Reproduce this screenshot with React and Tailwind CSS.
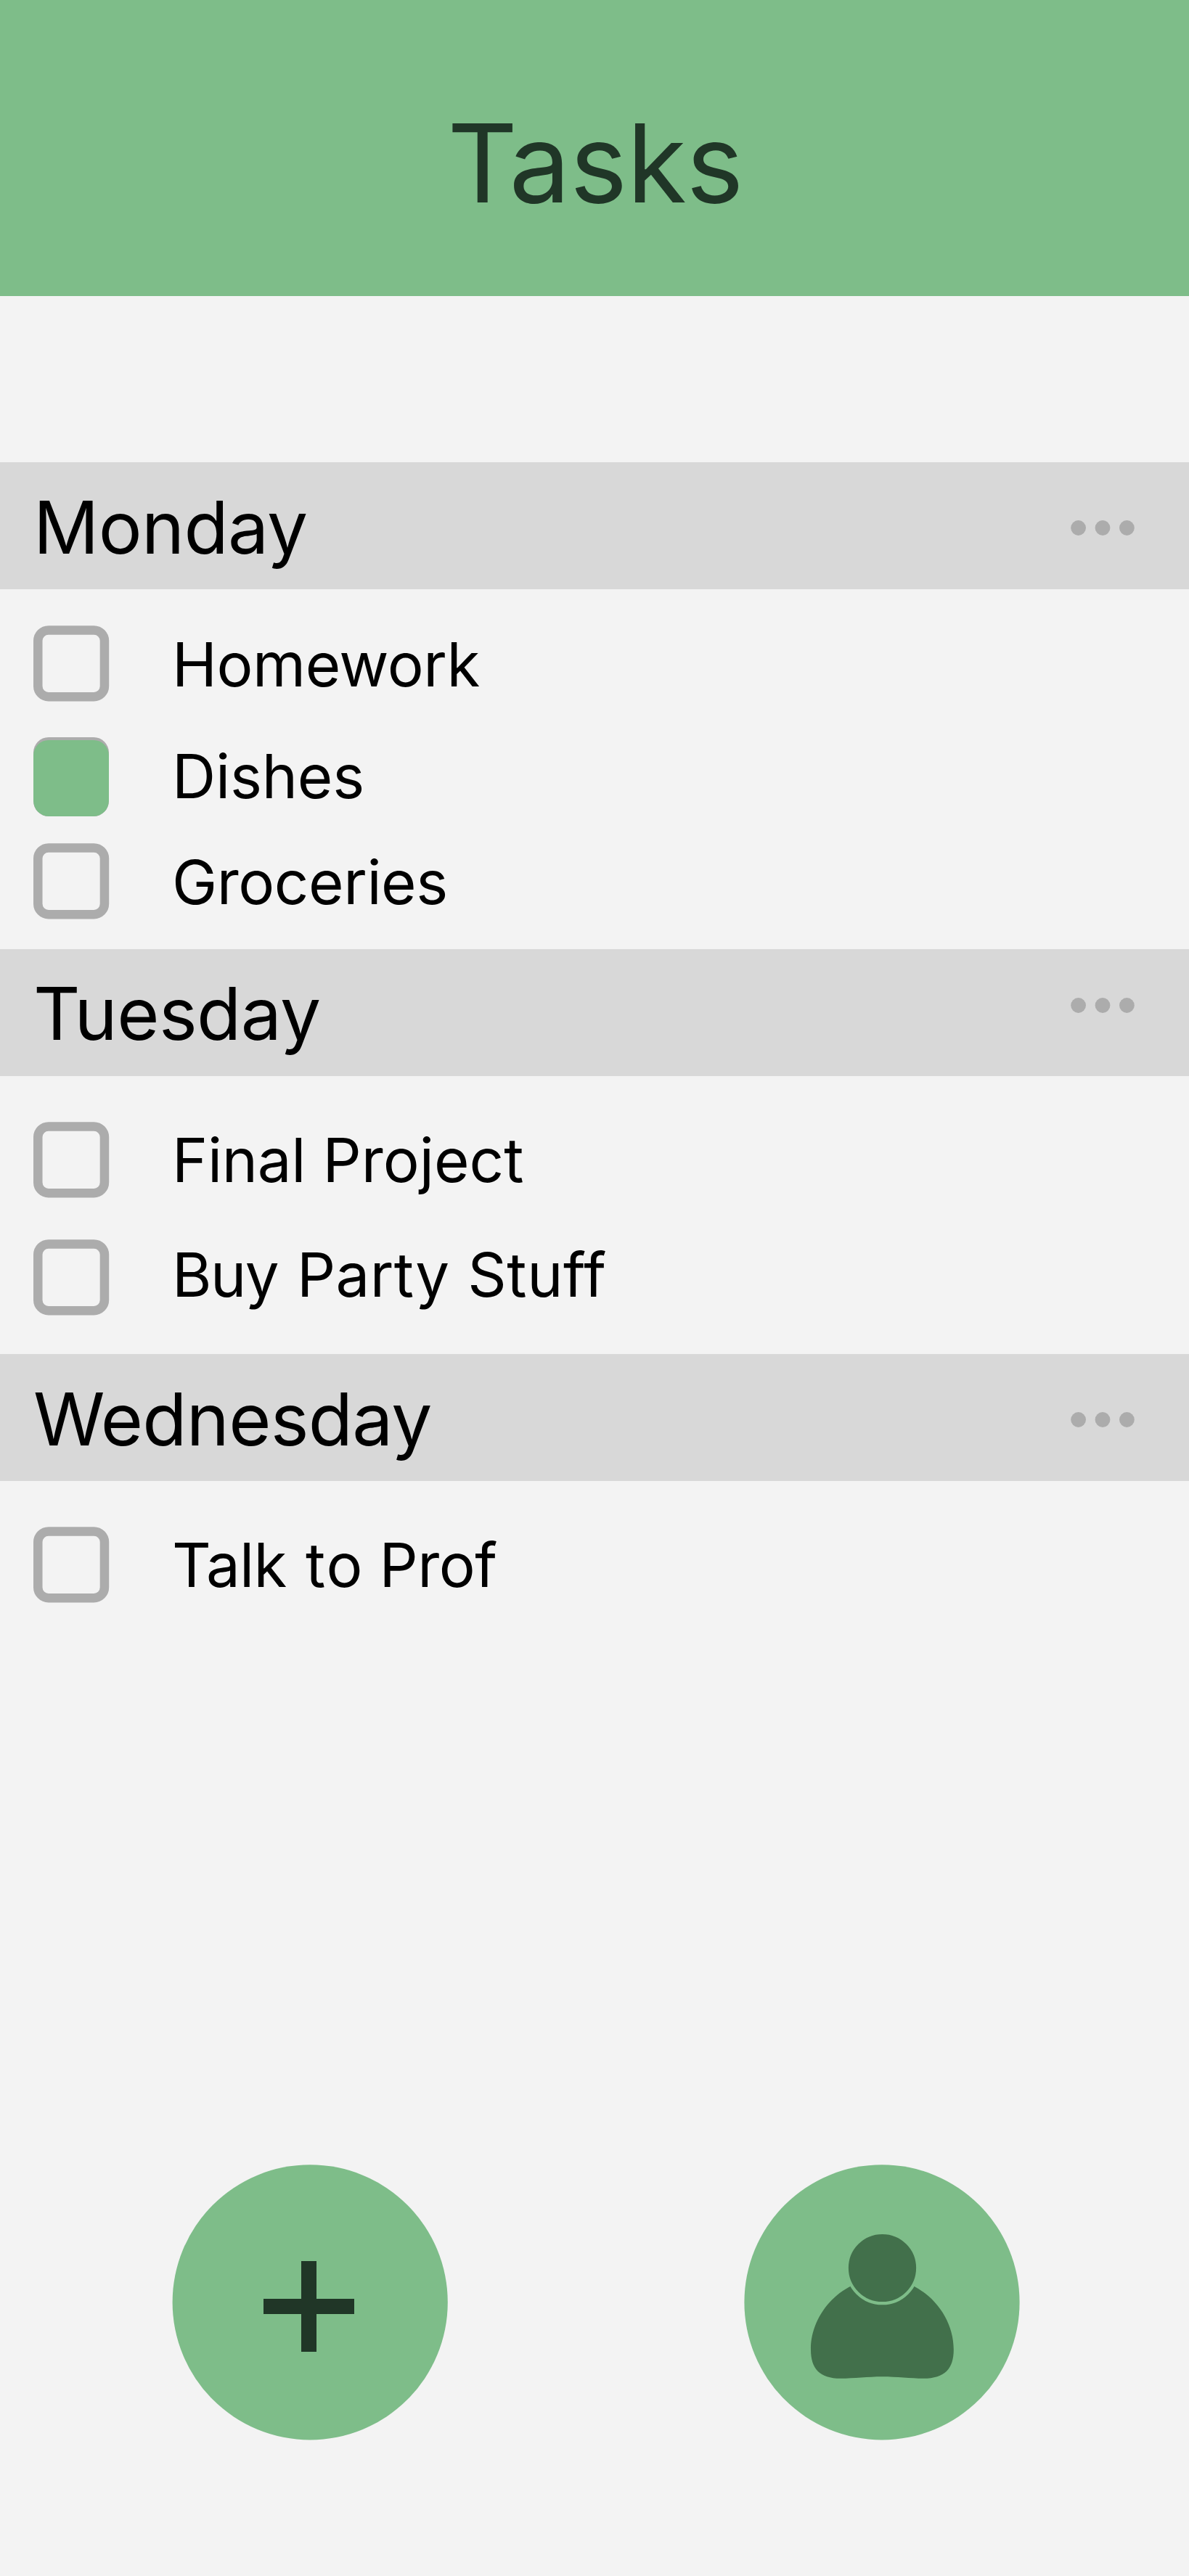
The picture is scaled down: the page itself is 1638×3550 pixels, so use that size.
const Check = ({ done }) =>
  done ? (
    <span className="relative h-[109px] w-[104px] shrink-0 overflow-hidden rounded-[21px] bg-[#acacac]">
      <span className="absolute inset-x-0 bottom-0 h-[105px] rounded-[21px] bg-[#7ebd89]" />
    </span>
  ) : (
    <svg className="-mr-px block shrink-0" width="105" height="105" viewBox="0 0 105 105" fill="none">
      <rect x="6.25" y="6.5" width="91.7" height="91.7" rx="14.6" stroke="#acacac" strokeWidth="12.5" />
    </svg>
  );

const Task = ({ done, className, labelClass, children }) => (
  <li className={`flex items-start gap-[87px] pl-[46px] ${className || ""}`}>
    <Check done={done} />
    <span className={`text-[83.36px] leading-[105px] whitespace-nowrap ${labelClass || ""}`}>{children}</span>
  </li>
);

const Day = ({ name, dotsClass, nameClass, className, children }) => (
  <section className={className}>
    <header className="flex h-[175px] items-start justify-between bg-[#d8d8d8] pr-[75px] pl-[46px]">
      <h2 className={`text-[100px] leading-[175px] ${nameClass}`}>{name}</h2>
      <button aria-label="More" className={dotsClass}>
        <svg className="block" width="88" height="21" viewBox="0 0 88 21" fill="#acacac">
          <circle cx="10.6" cy="10.5" r="10.4" />
          <circle cx="44" cy="10.5" r="10.4" />
          <circle cx="77.4" cy="10.5" r="10.4" />
        </svg>
      </button>
    </header>
    <ul>{children}</ul>
  </section>
);

export default function App() {
  return (
    <main className="flex h-[3550px] w-[1638px] flex-col overflow-hidden bg-[#f3f3f3] font-['Inter',sans-serif] text-black">
      <header className="h-[408px] bg-[#7ebd89] pt-[134px] text-center">
        <h1 className="pl-[2px] text-[150px] leading-[181px] tracking-[-0.65px] text-[#203627]">Tasks</h1>
      </header>

      <Day name="Monday" className="mt-[229px] h-[671px]" dotsClass="mt-[80px]" nameClass="pt-[2px] tracking-[-0.66px]">
        <Task className="mt-[50px] h-[154px]" labelClass="pt-px tracking-[-0.42px]">Homework</Task>
        <Task done className="h-[146px]" labelClass="pt-px tracking-[-0.2px]">Dishes</Task>
        <Task labelClass="pt-px tracking-[-0.45px]">Groceries</Task>
      </Day>

      <Day name="Tuesday" className="h-[558px]" dotsClass="mt-[67px]" nameClass="pt-px tracking-[-0.57px]">
        <Task className="mt-[63px] h-[162px]">
          <span className="tracking-[-0.3px]">Final</span> Project
        </Task>
        <Task labelClass="-mt-1">
          <span className="tracking-[-1.5px]">Buy</span> <span className="ml-[2.3px] tracking-[0.4px]">Party</span>{" "}
          <span className="ml-[1.3px] tracking-[0.6px]">Stuff</span>
        </Task>
      </Day>

      <Day name="Wednesday" dotsClass="mt-[80px]" nameClass="pt-[2px] tracking-[-0.72px]">
        <Task className="mt-[63px]">
          <span className="tracking-[-0.7px]">Talk</span> <span className="ml-[2.9px] tracking-[2px]">to</span>{" "}
          <span className="-ml-[2.3px] tracking-[-0.55px]">Prof</span>
        </Task>
      </Day>

      <nav className="mt-auto mb-[187px] flex justify-between pr-[233px] pl-[237px]">
        <button aria-label="Add task">
          <svg className="block" width="380" height="380" viewBox="0 0 380 380">
            <circle cx="190.2" cy="189.8" r="189.6" fill="#7ebd89" />
            <path d="M178 133h21v52h52v21h-52v52h-21v-52h-52v-21h52z" fill="#203627" />
          </svg>
        </button>
        <button aria-label="Profile">
          <svg className="block" width="380" height="380" viewBox="0 0 380 380">
            <circle cx="190" cy="189.8" r="189.6" fill="#7ebd89" />
            <path
              d="M190.5 157C244 157 288.8 203 288.8 255C288.8 281 277 294.8 247 294.8C229 294.8 211 292.3 190.5 292.3C170 292.3 152 294.8 133 294.8C104 294.8 92 281 92 255C92 203 137 157 190.5 157Z"
              fill="#42704b"
            />
            <circle cx="190.5" cy="142.5" r="48.7" fill="#42704b" stroke="#7ebd89" strokeWidth="4.2" />
          </svg>
        </button>
      </nav>
    </main>
  );
}
